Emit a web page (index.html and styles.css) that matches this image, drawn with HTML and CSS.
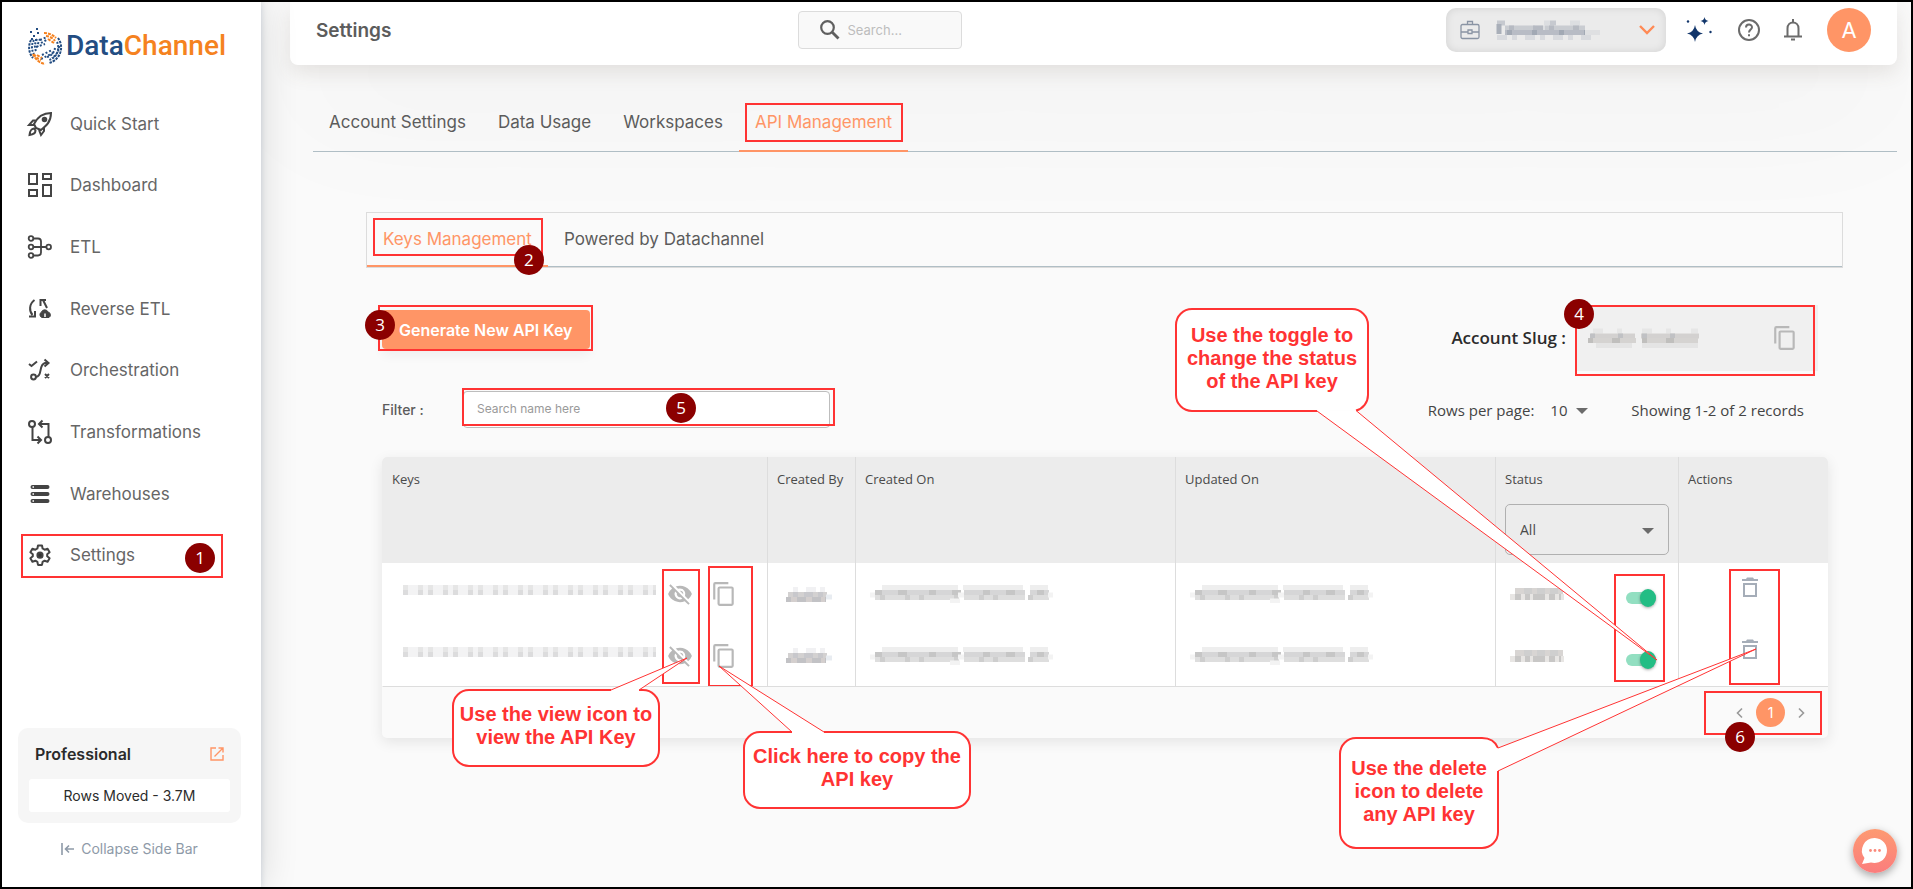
FILE: index.html
```html
<!DOCTYPE html>
<html lang="en">
<head>
<meta charset="utf-8">
<title>DataChannel - Settings</title>
<link rel="stylesheet" href="styles.css">
</head>
<body>
<svg class="defs" aria-hidden="true">
  <symbol id="i-copy" viewBox="0 0 24 24"><path fill="currentColor" d="M16 1H4a2 2 0 0 0-2 2v14h2V3h12zm3 4H8a2 2 0 0 0-2 2v14a2 2 0 0 0 2 2h11a2 2 0 0 0 2-2V7a2 2 0 0 0-2-2zm0 16H8V7h11z"/></symbol>
  <symbol id="i-eye" viewBox="0 0 24 24"><path fill="currentColor" d="M12 7a5 5 0 0 1 4.640 6.830l2.920 2.920A11.800 11.800 0 0 0 23 12a11.800 11.800 0 0 0-14.980-7l2.160 2.160A5 5 0 0 1 12 7zM2 4.270l2.280 2.280.46.46A11.800 11.800 0 0 0 1 12a11.800 11.800 0 0 0 15.380 6.660l.42.42L19.730 22 21 20.730 3.270 3zM7.530 9.800l1.550 1.550A3 3 0 0 0 12.650 14.920l1.550 1.550A5 5 0 0 1 7.530 9.800zm4.310-.78 3.150 3.150.02-.16a3 3 0 0 0-3-3z"/></symbol>
  <symbol id="i-trash" viewBox="0 0 16 20"><path fill="currentColor" d="M0 2h4l1-1.500h6l1 1.500h4v2H0zM1 6h14v14H1zm2 2v10h10V8z"/></symbol>
  <symbol id="m-key" viewBox="0 0 253 10"><g fill="none" stroke-width="5"><path stroke="#f3f3f4" d="M0 2.500h253M0 7.500h253"/><path stroke="#e6e6e6" stroke-dasharray="5 10 5 5" d="M0 2.500h253"/><path stroke="#dcdcdd" stroke-dasharray="5 10 5 5" d="M0 7.500h253"/></g></symbol>
  <symbol id="m-name" viewBox="0 0 48 15"><g fill="none" stroke-width="5"><path stroke="#f1f1f3" stroke-dasharray="5 8 10 4" d="M8 2.500h34"/><path stroke="#d3d1d1" d="M3 7.500h39"/><path stroke="#c8c8cc" stroke-dasharray="5 6 9 5" d="M8 7.500h34"/><path stroke="#c2c2c5" d="M1 12.500h40"/><path stroke="#d4cfce" stroke-dasharray="6 9" d="M6 12.500h34"/><path stroke="#e8ecf1" d="M41 10h6"/></g></symbol>
  <symbol id="m-date" viewBox="0 0 184 18"><g fill="none" stroke-width="5"><path stroke="#eeeeee" d="M12 2.500h76M93 2.500h60M160 2.500h18"/><path stroke="#d6d6d7" d="M5 7.500h83M94 7.500h61M160 7.500h19"/><path stroke="#c6c6c6" stroke-dasharray="7 16 9 22" d="M5 7.500h173"/><path stroke="#dedede" d="M5 12.500h83M94 12.500h61M160 12.500h19"/><path stroke="#cecece" stroke-dasharray="5 20 5 9 5 30" d="M10 12.500h160"/><path stroke="#f3f3f3" d="M0 10h5M178 10h5M88 10h6M80 16h10"/></g></symbol>
  <symbol id="m-status" viewBox="0 0 54 14"><g fill="none" stroke-width="6"><path stroke="#d8d5d3" stroke-dasharray="12 3 9 4" d="M5 4h48"/><path stroke="#e8e6e4" d="M0 10h54"/><path stroke="#c8c7c6" stroke-dasharray="6 4 5 3 12 4" d="M5 10h46"/><path stroke="#cfcfcf" stroke-dasharray="8 5" d="M14 4h34"/></g></symbol>
</svg>

<div class="app">
  <aside class="sidebar">
    <a class="logo" href="#" aria-label="DataChannel home">
      <svg width="36" height="38" viewBox="0 0 36 38" fill="none" stroke-width="2" aria-hidden="true">
        <g stroke="#234d82">
          <path stroke-dasharray="2.500 1" d="M3 13a16 16 0 0 0 2 18M30 11a16 16 0 0 1-9 25"/>
          <path stroke-dasharray="2 1.300" d="M6 13a13 13 0 0 0 0 14M29 15a13 13 0 0 1-8 18"/>
          <path stroke-dasharray="2 1.500" d="M9 12c-2 4-3 8-1 12M27 21a11 11 0 0 1-8 9M12 12c-1 2-3 6-2 8M31 19c0 6-3 9-7 12"/>
          <path stroke-dasharray="2 2" d="M13 16l7-4M8 20l9-3M14 28l10-5M13 32l12-6M12 13l7-3"/>
          <path d="M2 5h2M5 9h2M8 2h2M9 6h2M3 12h2M7 13h2"/>
        </g>
        <g stroke="#f58220">
          <path stroke-dasharray="3 1" d="M16 6a16 16 0 0 1 12 5M5 27a16 16 0 0 0 12 10"/>
          <path stroke-dasharray="3 1.200" d="M18 9a12 12 0 0 1 9 5M6 27c2 4 4 5 7 6M20 12l6 4M9 28l5 3"/>
        </g>
      </svg>
      <span class="logo-data">Data</span><span class="logo-channel">Channel</span>
    </a>
    <nav class="nav">
      <a href="#"><svg viewBox="0 0 24 24" aria-hidden="true"><path d="M8 16 6 12c3-6 8-11 17-11 0 9-5 13-10 17zM8.500 8.500H5l-4 4.500h5M16 15.500V19l-3 4-2-5M6 16.500c-3 .5-4 2-4.500 6.500 4-.5 6-1.500 6-4.500z"/><circle cx="16.500" cy="7.500" r="1.800" fill="#444"/></svg>Quick Start</a>
      <a href="#"><svg viewBox="0 0 24 24" aria-hidden="true"><path d="M1 1h8v10H1zM15 1h8v5h-8zM15 12h8v11h-8zM1 17h8v6H1z"/></svg>Dashboard</a>
      <a href="#"><svg viewBox="0 0 24 24" aria-hidden="true"><g stroke-width="1.800"><circle cx="3" cy="3.500" r="2.300"/><circle cx="3" cy="12" r="2.300"/><circle cx="3" cy="20.500" r="2.300"/><circle cx="20.700" cy="12" r="2.300"/><path d="M5.500 3.500H10q3 0 3 3v11q0 3-3 3H5.500M5.500 12h13"/></g></svg>ETL</a>
      <a href="#"><svg viewBox="0 0 24 24" aria-hidden="true"><path d="M6.500 3C1 7 1 14 4.500 18M1 19.500h6V14M19 11l-4-8M12.500 9V3H18"/><path fill="#444" stroke-width="1" d="M14 20.500a3 3 0 0 1-.5-5.500 3.500 3.500 0 0 1 6.500 0 3 3 0 0 1 1 5.500z"/><path stroke="#fff" stroke-width="1.500" d="M17 20v-3.500"/></svg>Reverse ETL</a>
      <a href="#"><svg viewBox="0 0 24 24" aria-hidden="true"><path d="m1 6 2.500 2L9 3.500M8 19c7-1 2-12 9-14h3M16.500 1.500 20.500 5l-4 3.500M17 16l4 4m0-4-4 4"/><circle cx="5.500" cy="19" r="2.400"/></svg>Orchestration</a>
      <a href="#"><svg viewBox="0 0 24 24" aria-hidden="true"><circle cx="4" cy="4" r="3"/><circle cx="20" cy="20" r="3"/><path d="M4.500 7v13H12M9.500 16.500 13 20l-3.500 3.500M20.500 17V4H12M14.500.5 11 4l3.500 3.500"/></svg>Transformations</a>
      <a href="#"><svg viewBox="0 0 24 24" aria-hidden="true"><path stroke-width="4" stroke-linecap="round" d="M4.500 5h15M4.500 12h15M4.500 19h15"/><path stroke="#fff" stroke-width="1.500" d="M4.500 5H6M4.500 12H6M4.500 19H6"/></svg>Warehouses</a>
      <a href="#" class="marked"><svg viewBox="0 0 24 24" aria-hidden="true"><path stroke-linejoin="round" d="M10 2.500h4l.6 3 2 1.200 3-1 2 3.500-2.400 2v2l2.400 2-2 3.500-3-1-2 1.200-.6 3h-4l-.6-3-2-1.200-3 1-2-3.500 2.400-2v-2l-2.400-2 2-3.500 3 1 2-1.200z"/><circle cx="12" cy="12.200" r="2.600" fill="#333"/></svg>Settings<span class="hl"></span><span class="badge">1</span></a>
    </nav>
    <section class="plan">
      <header><h2>Professional</h2><a href="#" aria-label="Open plan"><svg width="14" height="14" viewBox="0 0 14 14" fill="none" stroke="#ff9566" stroke-width="1.400" aria-hidden="true"><path d="M6 1H1v12h12V8M8.500 1H13v4.500M13 1 4.500 9.500"/></svg></a></header>
      <p>Rows Moved - 3.7M</p>
    </section>
    <button class="collapse" type="button"><svg width="14" height="14" viewBox="0 0 14 14" fill="none" stroke="#8e9aa8" stroke-width="1.600" aria-hidden="true"><path d="M1 1v12M13 7H5M8 3.500 4.500 7 8 10.500"/></svg>Collapse Side Bar</button>
  </aside>

  <div class="main">
    <header class="topbar">
      <h1>Settings</h1>
      <label class="search">
        <svg width="20" height="20" viewBox="0 0 20 20" fill="none" stroke="#5f5f5f" stroke-width="2.200" aria-hidden="true"><circle cx="7.500" cy="7.500" r="6.300"/><path stroke-width="2.800" d="m12 12 6.500 6.500"/></svg>
        <input type="search" placeholder="Search..." aria-label="Search">
      </label>
      <div class="tools">
        <button class="workspace" type="button" aria-label="Workspace">
          <svg width="20" height="20" viewBox="0 0 20 20" fill="none" stroke="#8a94a4" stroke-width="1.300" aria-hidden="true"><rect x="1" y="4.500" width="18" height="14" rx="1.500"/><path d="M7.500 4.500V1.500h5v3M1 12h7M12 12h7M8 10h4v3.500H8z"/></svg>
          <svg class="ws-name" width="104" height="20" viewBox="0 0 104 20" fill="none" stroke-width="5" aria-hidden="true"><path stroke="#c6c9cf" d="M0 3h8M53 3h6"/><path stroke="#dcdee1" d="M47 3h6M73 3h10"/><path stroke="#c9ccd1" d="M8 8h30M48 8h40"/><path stroke="#dcdee1" d="M38 8h10"/><path stroke="#b6bac2" stroke-dasharray="5 19 10 6" d="M12 8h70"/><path stroke="#a9afb9" d="M2 4v10"/><path stroke="#b8bcc5" d="M8 12.500h80"/><path stroke="#a2a9b4" stroke-dasharray="5 20 5 22" d="M10 12.500h78"/><path stroke="#d8dade" stroke-dasharray="10 5 5 8" d="M0 17.500h98"/><path stroke="#dfe0e2" d="M88 12.500h15"/></svg>
          <svg class="ws-arrow" width="16" height="10" viewBox="0 0 16 10" fill="none" stroke="#ff8a55" stroke-width="2.400" aria-hidden="true"><path d="m1 1 7 7 7-7"/></svg>
        </button>
        <button class="icon-btn spark" type="button" aria-label="Assistant"><svg width="26" height="26" viewBox="0 0 26 26" fill="#12366b" aria-hidden="true"><path d="M9 8q1 7 8 8.500-7 1.500-8 8.500-1-7-8-8.500 7-1.500 8-8.500zM18.500 0q.5 3.500 4 4-3.500.5-4 4-.5-3.500-4-4 3.500-.5 4-4z"/><circle cx="2" cy="4.500" r="1.200"/><circle cx="24.500" cy="15" r="1.200"/></svg></button>
        <button class="icon-btn help" type="button" aria-label="Help"><svg width="22" height="22" viewBox="0 0 22 22" fill="none" stroke="#6b6b6b" stroke-width="2" aria-hidden="true"><circle cx="11" cy="11" r="10"/><path d="M8 8.500C8 4.500 14 4.500 14 8.300c0 2.200-3 2.400-3 5.200M11 15.200v2"/></svg></button>
        <button class="icon-btn bell" type="button" aria-label="Notifications"><svg width="18" height="22" viewBox="0 0 18 22" fill="none" stroke="#6b6b6b" stroke-width="2" aria-hidden="true"><path d="M3.500 17V9.500C3.500 1.500 14.500 1.500 14.500 9.500V17M0 17.500h18M9 0v3"/><path d="M7 20.500h4"/></svg></button>
        <button class="avatar" type="button">A</button>
      </div>
    </header>

    <nav class="tabs">
      <a href="#">Account Settings</a>
      <a href="#">Data Usage</a>
      <a href="#">Workspaces</a>
      <a href="#" class="active">API Management<span class="hl"></span></a>
    </nav>

    <main class="panel">
      <nav class="tabs sub">
        <a href="#" class="active">Keys Management<span class="hl"></span><span class="badge">2</span></a>
        <a href="#">Powered by Datachannel</a>
      </nav>

      <div class="content">
        <div class="row actions">
          <button class="generate" type="button">Generate New API Key<span class="hl"></span><span class="badge">3</span></button>
          <div class="slug">
            <span class="slug-label">Account Slug :</span>
            <div class="slug-box">
              <svg width="114" height="20" viewBox="0 0 114 20" fill="none" stroke-width="5" aria-hidden="true"><path stroke="#e6e6e6" stroke-dasharray="10 14 5 20" d="M5 3h105"/><path stroke="#d3d1d0" d="M3 8h44M53 8h58"/><path stroke="#c0c1c4" stroke-dasharray="5 23 5 19" d="M2 8h104"/><path stroke="#d5d3d1" d="M0 12.500h48M54 12.500h56"/><path stroke="#c0bfbd" stroke-dasharray="5 19 8 22" d="M0 12.500h108"/><path stroke="#e4e4e4" d="M8 17.500h36M54 17.500h56"/></svg>
              <button class="icon-btn copy" type="button" aria-label="Copy slug"><svg width="26" height="26"><use href="#i-copy"/></svg></button>
              <span class="hl"></span><span class="badge">4</span>
            </div>
          </div>
        </div>

        <div class="row filters">
          <div class="filter">
            <label for="filter">Filter :</label>
            <div class="filter-box"><input id="filter" type="text" placeholder="Search name here"><span class="hl"></span><span class="badge">5</span></div>
          </div>
          <div class="paging-info">
            <label for="rows">Rows per page:</label>
            <span class="pick"><select id="rows"><option>10</option></select><svg width="12" height="6" viewBox="0 0 12 6" fill="#6b6b6b" aria-hidden="true"><path d="M0 0h12L6 6z"/></svg></span>
            <span class="count">Showing 1-2 of 2 records</span>
          </div>
        </div>

        <section class="card">
          <table>
            <colgroup><col class="c-keys"><col class="c-by"><col><col><col class="c-status"><col class="c-actions"></colgroup>
            <thead>
              <tr><th>Keys</th><th>Created By</th><th>Created On</th><th>Updated On</th>
                <th><label for="status">Status</label><span class="pick status"><select id="status"><option>All</option></select><svg width="12" height="6" viewBox="0 0 12 6" fill="#6b6b6b" aria-hidden="true"><path d="M0 0h12L6 6z"/></svg></span></th><th>Actions</th></tr>
            </thead>
            <tbody>
              <tr>
                <td><div class="key"><svg width="253" height="10"><use href="#m-key"/></svg><button class="icon-btn eye" type="button" aria-label="View key"><svg width="26" height="26"><use href="#i-eye"/></svg></button><button class="icon-btn copy" type="button" aria-label="Copy key"><svg width="26" height="26"><use href="#i-copy"/></svg></button></div><span class="hl hl-eye"></span><span class="hl hl-copy"></span></td>
                <td class="blur-name"><svg width="48" height="15"><use href="#m-name"/></svg></td>
                <td class="blur-date"><svg width="184" height="18"><use href="#m-date"/></svg></td>
                <td class="blur-date"><svg width="184" height="18"><use href="#m-date"/></svg></td>
                <td><div class="state"><svg width="54" height="14"><use href="#m-status"/></svg><input type="checkbox" role="switch" aria-label="Key active" checked></div><span class="hl hl-toggle"></span></td>
                <td class="remove"><button class="icon-btn" type="button" aria-label="Delete key"><svg width="16" height="20"><use href="#i-trash"/></svg></button><span class="hl hl-trash"></span></td>
              </tr>
              <tr>
                <td><div class="key"><svg width="253" height="10"><use href="#m-key"/></svg><button class="icon-btn eye" type="button" aria-label="View key"><svg width="26" height="26"><use href="#i-eye"/></svg></button><button class="icon-btn copy" type="button" aria-label="Copy key"><svg width="26" height="26"><use href="#i-copy"/></svg></button></div></td>
                <td class="blur-name"><svg width="48" height="15"><use href="#m-name"/></svg></td>
                <td class="blur-date"><svg width="184" height="18"><use href="#m-date"/></svg></td>
                <td class="blur-date"><svg width="184" height="18"><use href="#m-date"/></svg></td>
                <td><div class="state"><svg width="54" height="14"><use href="#m-status"/></svg><input type="checkbox" role="switch" aria-label="Key active" checked></div></td>
                <td class="remove"><button class="icon-btn" type="button" aria-label="Delete key"><svg width="16" height="20"><use href="#i-trash"/></svg></button></td>
              </tr>
            </tbody>
          </table>
          <footer class="pager">
            <button type="button" aria-label="Previous page"><svg width="7" height="10" viewBox="0 0 7 10" fill="none" stroke="#999" stroke-width="1.600"><path d="M6 .5 1.500 5 6 9.500"/></svg></button>
            <button type="button" class="current">1</button>
            <button type="button" aria-label="Next page"><svg width="7" height="10" viewBox="0 0 7 10" fill="none" stroke="#999" stroke-width="1.600"><path d="M1 .5 5.500 5 1 9.500"/></svg></button>
            <span class="hl"></span><span class="badge">6</span>
          </footer>

          <div class="callout view"><svg width="208" height="78"><path d="M159 1H17A16 16 0 0 0 1 17V61A16 16 0 0 0 17 77H191A16 16 0 0 0 207 61V17A16 16 0 0 0 191 1H187"/><path class="tail" d="M159 1 235-31 187 1"/></svg><p>Use the view icon to view the API Key</p></div>
          <div class="callout clone"><svg width="228" height="78"><path d="M49 1H17A16 16 0 0 0 1 17V61A16 16 0 0 0 17 77H211A16 16 0 0 0 227 61V17A16 16 0 0 0 211 1H81"/><path class="tail" d="M49 1-24-65 81 1"/></svg><p>Click here to copy the API key</p></div>
          <div class="callout toggle"><svg width="194" height="104"><path d="M142 103H17A16 16 0 0 1 1 87V17A16 16 0 0 1 17 1H177A16 16 0 0 1 193 17V87A16 16 0 0 1 181 102.500"/><path class="tail" d="M142 103 482 352 181 102.500"/></svg><p>Use the toggle to change the status of the API key</p></div>
          <div class="callout delete"><svg width="160" height="112"><path d="M159 34V95A16 16 0 0 1 143 111H17A16 16 0 0 1 1 95V17A16 16 0 0 1 17 1H143Q155 1 159 11"/><path class="tail" d="M159 34 417-88 159 11"/></svg><p>Use the delete icon to delete any API key</p></div>
        </section>
      </div>
    </main>
    <button class="chat" type="button" aria-label="Chat"><svg width="28" height="28" viewBox="0 0 28 28" aria-hidden="true"><path fill="#fff" d="M14 1a12.500 12.500 0 1 1-4 24.500L1 27l2.500-6A12.500 12.500 0 0 1 14 1z"/><g fill="#fb8a7c"><circle cx="9.500" cy="13.500" r="1.400"/><circle cx="14" cy="13.500" r="1.400"/><circle cx="18.500" cy="13.500" r="1.400"/></g></svg></button>
  </div>
</div>
</body>
</html>
```
FILE: styles.css
```css
* { box-sizing: border-box; }
body {
  margin: 0;
  font-family: Inter, "Open Sans", sans-serif;
  font-size: 16px;
  color: #5c5c5c;
}
h1, h2, p { margin: 0; }
a { color: inherit; text-decoration: none; }
button, input, select { font: inherit; color: inherit; }
button { padding: 0; border: 0; background: none; cursor: pointer; }
svg { display: block; flex: none; overflow: visible; }
.defs { position: absolute; width: 0; height: 0; }

.app {
  display: flex;
  min-height: 100vh;
  border: 2px solid #000;
  background: #fafafa;
  overflow: hidden;
}

/* Annotation marks */
.hl {
  position: absolute;
  border: 2px solid #f33;
  pointer-events: none;
}
.badge {
  position: absolute;
  display: grid;
  place-items: center;
  width: 30px;
  height: 30px;
  border-radius: 50%;
  background: #8b0000;
  color: #fff;
  font: 17px/30px "Open Sans", sans-serif;
}

/* Sidebar */
.sidebar {
  position: relative;
  z-index: 2;
  flex: none;
  display: flex;
  flex-direction: column;
  width: 259px;
  padding: 24px 20px 28px 16px;
  background: #fff;
  box-shadow: 0 0 6px rgba(130, 150, 170, .35), 0 0 36px rgba(0, 0, 0, .14);
}
.logo {
  display: flex;
  align-items: center;
  height: 40px;
  padding-left: 10px;
  font: 500 28px/40px Roboto, sans-serif;
}
.logo svg { margin-right: 2px; }
.logo-data { color: #234d82; }
.logo-channel { color: #f58220; }
.nav {
  display: flex;
  flex-direction: column;
  height: 493px;
  margin-top: 27px;
}
.nav a {
  position: relative;
  flex: 1;
  display: flex;
  align-items: center;
  gap: 18px;
  padding-left: 10px;
  font-size: 17px;
  color: #666;
}
.nav svg {
  width: 24px;
  height: 24px;
  fill: none;
  stroke: #444;
  stroke-width: 2;
}
.nav .hl { inset: 10px 18px 8px 3px; }
.nav .badge { right: 26px; top: 19px; }
.plan {
  margin-top: auto;
  padding: 12px 11px 11px;
  border-radius: 10px;
  background: #f6f6f6;
}
.plan header {
  display: flex;
  align-items: center;
  justify-content: space-between;
  padding: 0 6px;
}
.plan h2 { font-size: 16px; line-height: 28px; font-weight: 600; color: #2b2b2b; }
.plan p {
  margin-top: 11px;
  border-radius: 3px;
  background: #fff;
  font-size: 14px;
  line-height: 33px;
  text-align: center;
  color: #2b2b2b;
}
.collapse {
  display: flex;
  align-items: center;
  gap: 6px;
  margin: 16px auto 0;
  font-size: 14px;
  line-height: 20px;
  color: #8e9aa8;
}

/* Header */
.main { position: relative; flex: 1; min-width: 0; }
.topbar {
  display: grid;
  grid-template-columns: 9fr 164px 17fr;
  align-items: center;
  height: 63px;
  margin: 0 14px 0 29px;
  padding: 0 26px 7px;
  border-radius: 0 0 8px 8px;
  background: #fff;
  box-shadow: 0 8px 20px rgba(90, 75, 60, .12), 0 40px 140px rgba(0, 0, 0, .05);
}
.topbar h1 { font-size: 19px; font-weight: 600; color: #5c5c5c; }
.search {
  display: flex;
  align-items: center;
  gap: 8px;
  height: 38px;
  padding-left: 21px;
  border: 1px solid #dcdcdc;
  border-radius: 4px;
  background: #f9f9f9;
}
.search input {
  width: 100px;
  padding: 0;
  border: 0;
  outline: 0;
  background: none;
  font-size: 13px;
}
.search input::placeholder { color: #bdbdbd; }
.tools { display: flex; align-items: center; justify-content: flex-end; }
.workspace {
  display: flex;
  align-items: center;
  width: 220px;
  height: 44px;
  padding: 0 11px 0 14px;
  border-radius: 10px;
  background: #ebebeb;
  box-shadow: inset 0 0 8px rgba(0, 0, 0, .1);
}
.ws-name { margin-left: 17px; }
.ws-arrow { margin-left: auto; }
.spark { margin-left: 20px; }
.help { margin-left: 26px; }
.bell { margin-left: 24px; }
.avatar {
  width: 44px;
  height: 44px;
  margin-left: 25px;
  border-radius: 50%;
  background: #ff9566;
  color: #fff;
  font-size: 22px;
}

/* Tabs */
.tabs {
  display: flex;
  margin: 30px 14px 0 52px;
  border-bottom: 1px solid #b0bec5;
}
.tabs a {
  position: relative;
  padding: 0 16px;
  margin-bottom: -1px;
  font-size: 17px;
  line-height: 55px;
  border-bottom: 2px solid transparent;
}
.tabs .active { color: #ff9566; border-color: #ff9566; }
.tabs .hl { inset: 8px 5px 8px 6px; }
.panel { margin: 60px 68px 0 105px; }
.tabs.sub {
  margin: 0;
  border: 1px solid #dcdcdc;
  box-shadow: inset 0 -1px #b0bec5;
}
.tabs.sub a { margin: 0; line-height: 52px; }
.tabs.sub .hl { inset: 5px 5px 9px 6px; }
.tabs.sub .badge { right: 4px; bottom: -10px; }

/* Key controls */
.content { padding: 37px 15px 0 16px; }
.row { display: flex; justify-content: space-between; }
.generate {
  position: relative;
  height: 39px;
  margin-top: 5px;
  padding: 0 17px;
  border-radius: 4px;
  background: #ff9566;
  color: #fff;
  font-weight: 600;
  box-shadow: 0 6px 12px rgba(0, 0, 0, .05);
}
.generate .hl { inset: -5px -3px -2px -4px; }
.generate .badge { left: -17px; top: 0; }
.slug {
  display: flex;
  align-items: center;
  gap: 10px;
  margin-right: 10px;
  color: #2b2b2b;
}
.slug-label { font: 600 17px/24px "Open Sans", sans-serif; }
.slug-box {
  position: relative;
  display: flex;
  align-items: center;
  justify-content: space-between;
  width: 242px;
  height: 66px;
  padding: 0 20px 0 12px;
  background: #f0f0f0;
}
.slug-box .hl { inset: 0 3px -5px -1px; }
.slug-box .badge { left: -12px; top: -6px; }
.copy, .eye { color: #b8b8b8; }
.filters { margin-top: 20px; align-items: center; }
.filter { display: flex; align-items: center; }
.filter label { width: 81px; font-size: 14px; font-weight: 500; }
.filter-box { position: relative; }
.filter input {
  display: block;
  width: 367px;
  height: 37px;
  padding: 0 13px 2px;
  border: 1px solid #bdbdbd;
  border-radius: 4px;
  background: #fff;
  font-size: 12px;
}
.filter input::placeholder { color: #9a9a9a; }
.filter-box .hl { inset: -3px -5px 2px -1px; }
.filter-box .badge { left: 203px; top: 2px; }
.paging-info {
  display: flex;
  align-items: center;
  margin-right: 24px;
  font: 15px/20px "Open Sans", sans-serif;
  color: #444;
}
.pick { position: relative; display: inline-block; }
.pick select {
  appearance: none;
  border: 0;
  background: none;
  width: 100%;
}
.pick svg { position: absolute; right: 0; top: 50%; margin-top: -2px; pointer-events: none; }
.paging-info .pick { width: 38px; margin: 0 43px 0 16px; }

/* Table */
.card {
  position: relative;
  margin-top: 29px;
  border-radius: 5px;
  box-shadow: 0 4px 14px rgba(0, 0, 0, .09);
}
table {
  width: 100%;
  table-layout: fixed;
  border-collapse: separate;
  border-spacing: 0;
  background: #fff;
  border-radius: 5px 5px 0 0;
}
.c-keys { width: 385px; }
.c-by { width: 88px; }
.c-status { width: 183px; }
.c-actions { width: 150px; }
th, td { position: relative; border-left: 1px solid #ddd; padding: 0 9px; }
th:first-child, td:first-child { border-left-color: transparent; }
th {
  height: 106px;
  padding-top: 12px;
  vertical-align: top;
  text-align: left;
  background: #ececec;
  font: 13px/20px "Open Sans", sans-serif;
  color: #4a4a4a;
}
th:first-child { border-radius: 5px 0 0; }
th:last-child { border-radius: 0 5px 0 0; }
th label { display: block; }
.pick.status { display: block; margin-top: 15px; width: 164px; }
.status select {
  height: 51px;
  padding: 0 14px;
  border: 1px solid #b0b0b0;
  border-radius: 5px;
  font-size: 14px;
}
.status svg { right: 15px; }
td { height: 62px; }
tbody tr:last-child td { border-bottom: 1px solid #ddd; }
.key { display: flex; align-items: center; padding-left: 11px; }
.key > svg { margin-bottom: 8px; }
.key .eye { margin-left: 11px; }
.key .copy { margin-left: 18px; }
.blur-name { padding-left: 17px; }
.blur-date { padding-left: 14px; }
.state { display: flex; align-items: center; padding-left: 5px; }
.state input {
  appearance: none;
  display: flex;
  align-items: center;
  width: 30px;
  height: 12px;
  margin: 8px 0 0 62px;
  border-radius: 6px;
  background: #92dfc1;
}
.state input::before {
  content: "";
  width: 18px;
  height: 18px;
  margin-left: 14px;
  border-radius: 50%;
  background: #23bd84;
  box-shadow: 0 1px 3px rgba(0, 0, 0, .35);
}
.remove .icon-btn { margin: 0 0 14px 54px; color: #a5adb8; }
.remove .icon-btn, .remove svg { display: block; }
.hl-eye { left: 279px; top: 6px; width: 38px; height: 115px; }
.hl-copy { left: 325px; top: 3px; width: 45px; height: 121px; }
.hl-toggle { right: 13px; top: 11px; width: 51px; height: 108px; }
.hl-trash { left: 50px; top: 6px; width: 51px; height: 116px; }
.pager {
  position: relative;
  display: flex;
  align-items: center;
  justify-content: flex-end;
  gap: 13px;
  height: 51px;
  padding-right: 23px;
  font-size: 14px;
}
.pager .current {
  width: 29px;
  height: 29px;
  border-radius: 50%;
  background: #ff9566;
  color: #fff;
}
.pager .hl { right: 6px; top: 4px; width: 118px; height: 44px; }
.pager .badge { right: 73px; top: 35px; }

/* Callouts */
.callout {
  position: absolute;
  display: grid;
  justify-items: center;
  align-items: start;
  color: #f33;
  font: bold 20px/23px "Liberation Sans", Arial, sans-serif;
  text-align: center;
}
.callout > * { grid-area: 1 / 1; }
.callout path { fill: #fff; stroke: #f33; stroke-width: 2; }
.callout .tail { stroke-width: 1; }
.callout p { position: relative; padding-top: 14px; }
.callout.view { left: 70px; top: 232px; width: 208px; }
.callout.clone { left: 361px; top: 274px; width: 228px; }
.callout.toggle { right: 459px; top: -149px; width: 194px; }
.callout.delete { right: 329px; top: 280px; width: 160px; }
.view p { width: 200px; }
.clone p { width: 218px; }
.toggle p { width: 180px; padding-top: 16px; }
.delete p { width: 144px; padding-top: 20px; }

.chat {
  position: absolute;
  right: 14px;
  bottom: 14px;
  display: grid;
  place-items: center;
  width: 44px;
  height: 44px;
  border-radius: 50%;
  background: linear-gradient(#fd9a72, #fb7d7d);
  box-shadow: 0 3px 8px rgba(0, 0, 0, .35);
}
```
